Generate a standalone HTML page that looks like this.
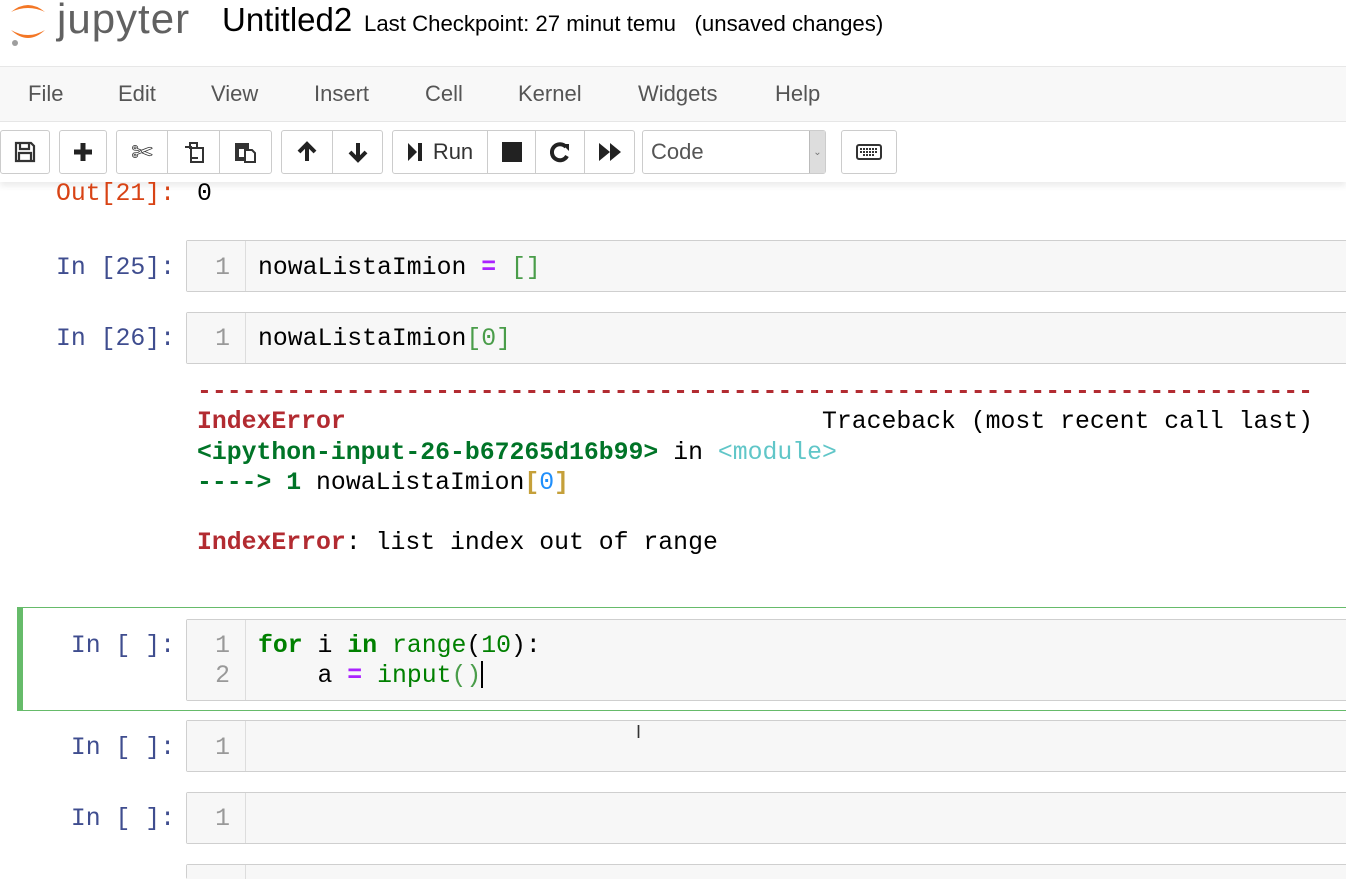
<!DOCTYPE html>
<html style="overflow:hidden;height:879px"><head><meta charset="utf-8"><style>
*{margin:0;padding:0;box-sizing:border-box}
body{width:1346px;height:879px;overflow:hidden;background:#fff;font-family:"Liberation Sans",sans-serif;position:relative}
.a{position:absolute;white-space:pre}
.m{font-family:"Liberation Mono",monospace;font-size:24.8px;line-height:30.3px}
.btn{position:absolute;top:130px;height:44px;border:1px solid #ccc;border-radius:3px;background:#fff;display:flex;align-items:center;justify-content:center;color:#333}
.cell{position:absolute;left:186px;right:-5px;background:#f7f7f7;border:1px solid #cfcfcf;border-radius:2px}
.gut{position:absolute;left:0;top:0;bottom:0;width:59px;border-right:1px solid #ddd;background:#f7f7f7}
.ln{color:#999;text-align:right;width:44px}
.p{color:#3f4d8f;text-align:right;width:175px;left:0}
.kw{color:#008000;font-weight:bold}
.op{color:#AA22FF;font-weight:bold}
.g{color:#008000}
.br{color:#4a9d4a}
</style></head><body>
<svg class="a" style="left:6px;top:0" width="44" height="48" viewBox="0 0 44 48">
<path d="M5 12 Q22 -2 39 12 Q22 4 5 12Z" fill="#F37726"/>
<path d="M5 30 Q22 46 39 30 Q22 40 5 30Z" fill="#F37726"/>
<circle cx="9" cy="43" r="3" fill="#9e9e9e"/>
</svg>
<div class="a" style="left:57px;top:-5px;font-size:42px;color:#616161;letter-spacing:1px">jupyter</div>
<div class="a" style="left:222px;top:1px;font-size:33px;color:#000">Untitled2</div>
<div class="a" style="left:364px;top:11px;font-size:22.2px;color:#000">Last Checkpoint: 27 minut temu   (unsaved changes)</div>
<div class="a" style="left:0;top:66px;width:1346px;height:56px;background:#f8f8f8;border-top:1px solid #e7e7e7;border-bottom:1px solid #e7e7e7"></div>
<div class="a" style="left:28px;top:81px;font-size:22px;color:#555">File</div>
<div class="a" style="left:118px;top:81px;font-size:22px;color:#555">Edit</div>
<div class="a" style="left:211px;top:81px;font-size:22px;color:#555">View</div>
<div class="a" style="left:314px;top:81px;font-size:22px;color:#555">Insert</div>
<div class="a" style="left:425px;top:81px;font-size:22px;color:#555">Cell</div>
<div class="a" style="left:518px;top:81px;font-size:22px;color:#555">Kernel</div>
<div class="a" style="left:638px;top:81px;font-size:22px;color:#555">Widgets</div>
<div class="a" style="left:775px;top:81px;font-size:22px;color:#555">Help</div>
<div class="a" style="left:0;top:122px;width:1346px;height:60px;background:#fff;box-shadow:0 4px 6px rgba(0,0,0,.08)"></div>
<div class="btn" style="left:0;width:50px"><svg width="22" height="22" viewBox="0 0 22 22"><path d="M2 2h15l3 3v15H2z M6 2v6h9V2 M5 12h12v8H5z" fill="none" stroke="#333" stroke-width="2.2"/></svg></div>
<div class="btn" style="left:59px;width:48px"><svg width="22" height="22"><path d="M11 2v18M2 11h18" stroke="#222" stroke-width="5"/></svg></div>
<div class="btn" style="left:116px;width:52px;border-radius:3px 0 0 3px"><span style="font-size:26px">✄</span></div>
<div class="btn" style="left:167px;width:53px;border-radius:0"><svg width="24" height="24"><path d="M8 3h7v5h-7zM3 7h6v11h7M9 8h12v14H9z" fill="none" stroke="#333" stroke-width="2"/></svg></div>
<div class="btn" style="left:219px;width:53px;border-radius:0 3px 3px 0"><svg width="24" height="24"><path d="M3 3h12v6H3z" fill="#333"/><path d="M3 3v16h7" stroke="#333" stroke-width="4" fill="none"/><path d="M11 10h7l3 3v9H11z" fill="none" stroke="#333" stroke-width="2"/></svg></div>
<div class="btn" style="left:281px;width:52px;border-radius:3px 0 0 3px"><svg width="22" height="22"><path d="M11 20V4M3 11l8-8 8 8" fill="none" stroke="#222" stroke-width="4"/></svg></div>
<div class="btn" style="left:332px;width:51px;border-radius:0 3px 3px 0"><svg width="22" height="22"><path d="M11 2v16M3 11l8 8 8-8" fill="none" stroke="#222" stroke-width="4"/></svg></div>
<div class="btn" style="left:392px;width:96px;border-radius:3px 0 0 3px;font-size:22px"><svg width="16" height="22" style="margin-right:10px"><path d="M1 2l9 9-9 9z" fill="#222"/><rect x="11" y="2" width="4" height="18" fill="#222"/></svg>Run</div>
<div class="btn" style="left:487px;width:49px;border-radius:0"><div style="width:20px;height:20px;background:#222"></div></div>
<div class="btn" style="left:535px;width:50px;border-radius:0"><svg width="22" height="22"><path d="M17 6A8 8 0 1 0 18 15" fill="none" stroke="#222" stroke-width="4"/><path d="M13 3h7v7z" fill="#222"/></svg></div>
<div class="btn" style="left:584px;width:51px;border-radius:0 3px 3px 0"><svg width="24" height="20"><path d="M1 1l11 9-11 9zM12 1l11 9-11 9z" fill="#222"/></svg></div>
<div class="btn" style="left:642px;width:184px;justify-content:flex-start;padding-left:8px;font-size:22px;color:#555">Code<div style="position:absolute;right:0;top:0;bottom:0;width:16px;background:#ddd;border-left:1px solid #bbb;font-size:10px;color:#777;display:flex;align-items:center;justify-content:center">⌄</div></div>
<div class="btn" style="left:841px;width:56px"><svg width="26" height="16"><rect x="1" y="1" width="24" height="14" rx="2" fill="none" stroke="#333" stroke-width="2"/><path d="M4 5h18M4 8h18M7 11h12" stroke="#333" stroke-width="2" stroke-dasharray="2 1"/></svg></div>
<div class="a m" style="left:56px;top:179px;color:#D84315">Out[21]:</div>
<div class="a m" style="left:197px;top:179px;color:#000">0</div>
<div class="a m p" style="top:253px">In [25]:</div>
<div class="cell" style="top:240px;height:52px"><div class="gut"></div></div>
<div class="a m ln" style="left:186px;top:253px">1</div>
<div class="a m" style="left:258px;top:253px;color:#000">nowaListaImion <span class="op">=</span> <span class="br">[]</span></div>
<div class="a m p" style="top:324px">In [26]:</div>
<div class="cell" style="top:312px;height:52px"><div class="gut"></div></div>
<div class="a m ln" style="left:186px;top:324px">1</div>
<div class="a m" style="left:258px;top:324px;color:#000">nowaListaImion<span class="br">[0]</span></div>
<div class="a m" style="left:197px;top:377px;color:#000"><span style="color:#B22B31;font-weight:bold">---------------------------------------------------------------------------</span>
<span style="color:#B22B31;font-weight:bold">IndexError</span>                                Traceback (most recent call last)
<span style="color:#007427;font-weight:bold">&lt;ipython-input-26-b67265d16b99&gt;</span> in <span style="color:#60C6C8">&lt;module&gt;</span>
<span style="color:#007427;font-weight:bold">----&gt; 1</span> nowaListaImion<span style="color:#C5A03A;font-weight:bold">[</span><span style="color:#208FFB">0</span><span style="color:#C5A03A;font-weight:bold">]</span>

<span style="color:#B22B31;font-weight:bold">IndexError</span>: list index out of range</div>
<div class="a" style="left:17px;top:607px;width:1340px;height:104px;border:1px solid #66BB6A;border-left:6px solid #66BB6A"></div>
<div class="a m p" style="top:631px">In [ ]:</div>
<div class="cell" style="top:619px;height:82px;background:#f7f7f7"><div class="gut"></div></div>
<div class="a m ln" style="left:186px;top:631px">1
2</div>
<div class="a m" style="left:258px;top:631px;color:#000"><span class="kw">for</span> i <span class="kw">in</span> <span class="g">range</span>(<span class="g">10</span>):
    a <span class="op">=</span> <span class="g">input</span><span class="br">()</span></div>
<div class="a" style="left:481px;top:661px;width:2px;height:27px;background:#000"></div>
<div class="a m p" style="top:733px">In [ ]:</div>
<div class="cell" style="top:720px;height:52px"><div class="gut"></div></div>
<div class="a m ln" style="left:186px;top:733px">1</div>
<div class="a" style="left:636px;top:722px;font-size:18px;color:#333">I</div>
<div class="a m p" style="top:804px">In [ ]:</div>
<div class="cell" style="top:792px;height:52px"><div class="gut"></div></div>
<div class="a m ln" style="left:186px;top:804px">1</div>
<div class="cell" style="top:864px;height:15px;border-bottom:none"><div class="gut"></div></div>
</body></html>
